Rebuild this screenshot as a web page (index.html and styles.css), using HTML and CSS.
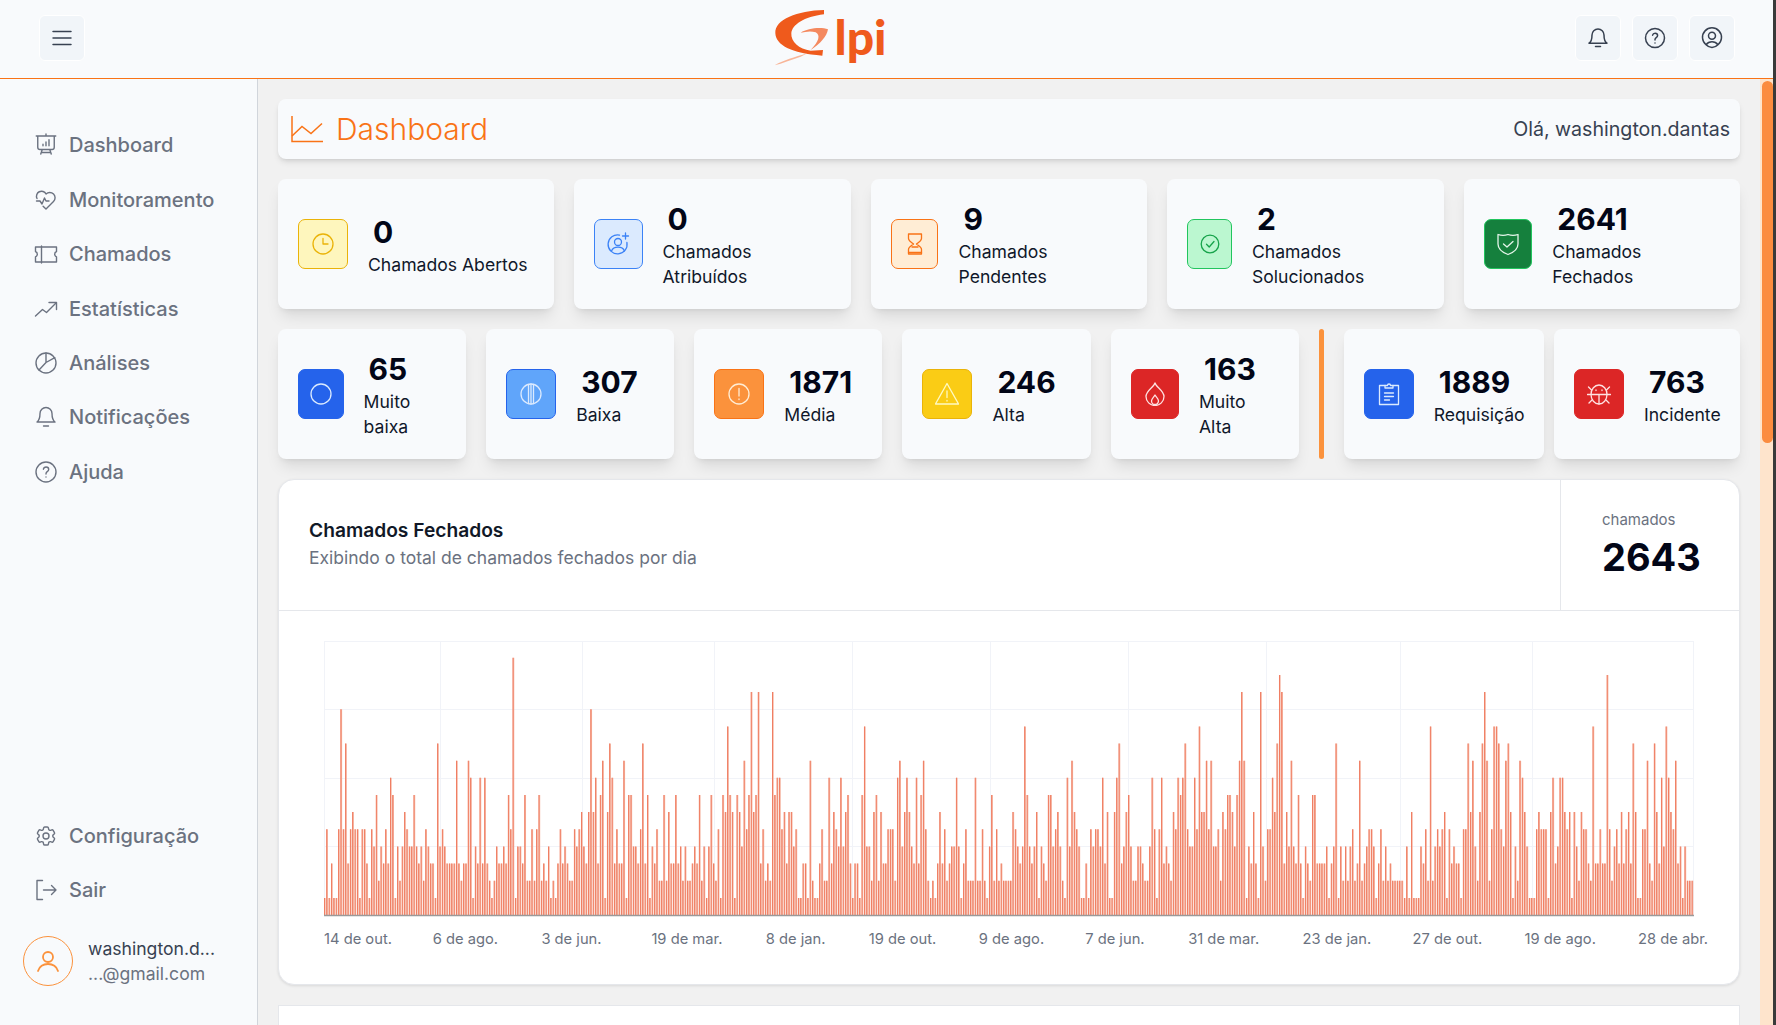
FILE: index.html
```html
<!DOCTYPE html>
<html lang="pt-BR">
<head>
<meta charset="utf-8">
<title>GLPI Dashboard</title>
<link rel="stylesheet" href="styles.css">
</head>
<body>
<div class="app">
  <header class="topbar">
    <button class="tool-btn" aria-label="Menu">
      <svg class="ico-menu" viewBox="0 0 24 24"><path d="M3.750 6h16.500M3.750 12h16.500M3.750 18h16.500"/></svg>
    </button>
    <div class="logo">
      <svg class="logo-mark" viewBox="220 0 165 219" aria-hidden="true">
        <path class="logo-a" d="M370 30C290 32 222 58 224 100C226 135 270 160 365 167L367 150L330 152C295 148 270 125 272 100C274 75 310 50 370 43Z"/>
        <path class="logo-b" d="M300 98C320 85 360 80 382 88C378 110 360 130 330 150C355 125 360 105 345 97C330 92 315 95 300 98Z"/>
        <path class="logo-c" d="M222 196C250 180 280 172 320 160L300 170C270 180 245 190 222 196Z"/>
      </svg>
      <span class="logo-text">lpi</span>
    </div>
    <div class="tools">
      <button class="tool-btn" aria-label="Notificações">
        <svg class="ico-24" viewBox="0 0 24 24"><path d="M6 9a6 6 0 0 1 12 0c0 5 1 7 3 8.200H3C5 16 6 14 6 9z"/><path d="M9.500 20.500h5"/></svg>
      </button>
      <button class="tool-btn" aria-label="Ajuda">
        <svg class="ico-24" viewBox="0 0 24 24"><circle cx="12" cy="12" r="9.500"/><path d="M9.600 9.200c.3-1.300 1.300-2 2.500-2 1.400 0 2.500 1 2.500 2.300 0 1-.6 1.600-1.400 2.100-.7.500-1.200 1-1.200 2v.4M12 16.900v.1"/></svg>
      </button>
      <button class="tool-btn" aria-label="Perfil">
        <svg class="ico-24" viewBox="0 0 24 24"><path d="M17.982 18.725A7.488 7.488 0 0 0 12 15.750a7.488 7.488 0 0 0-5.982 2.975m11.963 0a9.500 9.500 0 1 0-11.963 0m11.963 0A9.500 9.500 0 0 1 12 21.500a9.500 9.500 0 0 1-5.982-2.775M15.500 9.750a3.500 3.500 0 1 1-7 0 3.500 3.500 0 0 1 7 0Z"/></svg>
      </button>
    </div>
  </header>

  <div class="layout">
    <aside class="sidebar">
      <nav class="nav">
        <a class="nav-item"><svg class="nav-ico" viewBox="0 0 24 24"><path d="M3.750 3v11.250A2.250 2.250 0 0 0 6 16.500h2.250M3.750 3h-1.500m1.500 0h16.500m0 0h1.500m-1.500 0v11.250A2.250 2.250 0 0 1 18 16.500h-2.250m-7.500 0h7.500m-7.500 0-1 3m8.500-3 1 3m0 0 .5 1.500m-.5-1.500h-9.500m0 0-.5 1.500M9 11.250v1.500M12 9v3.750m3-6v6M12 3V1"/></svg>Dashboard</a>
        <a class="nav-item"><svg class="nav-ico" viewBox="0 0 24 24"><path d="M19.500 13.572l-7.500 7.428l-2.896-2.868M3 10.500a5 5 0 0 1 9-4.500a5 5 0 1 1 7.500 7.572"/><path d="M2.500 13h3.500l2 3l2.500-6l1.500 3h3"/></svg>Monitoramento</a>
        <a class="nav-item"><svg class="nav-ico" viewBox="0 0 24 24"><path d="M1.500 5h21v4.500a3 3 0 0 0 0 5.500V20h-21v-5a3 3 0 0 0 0-5.500z"/><path d="M7.500 4v17"/></svg>Chamados</a>
        <a class="nav-item"><svg class="nav-ico" viewBox="0 0 24 24"><path d="M1.500 19l7-6.500l4 3l9.500-9.500"/><path d="M15 5.500h7.500v7"/></svg>Estatísticas</a>
        <a class="nav-item"><svg class="nav-ico" viewBox="0 0 24 24"><circle cx="12" cy="12" r="10"/><path d="M12 2v9.500l8.800-4.800M12 11.500l-7 7.500"/></svg>Análises</a>
        <a class="nav-item"><svg class="nav-ico" viewBox="0 0 24 24"><path d="M6 8.500a6 6 0 0 1 12 0c0 5 1 7 3 8.500H3c2-1.500 3-3.500 3-8.500z"/><path d="M9.500 21h5"/></svg>Notificações</a>
        <a class="nav-item"><svg class="nav-ico" viewBox="0 0 24 24"><circle cx="12" cy="12" r="10"/><path d="M9.400 9.200c.3-1.400 1.400-2.200 2.700-2.200 1.500 0 2.600 1 2.600 2.400 0 1.100-.6 1.700-1.500 2.200-.7.500-1.200 1-1.200 2.100v.4M12 17v.1"/></svg>Ajuda</a>
      </nav>
      <div class="side-foot">
        <a class="nav-item"><svg class="nav-ico" viewBox="0 0 24 24"><path d="M9.594 3.940c.09-.542.56-.94 1.110-.94h2.593c.55 0 1.020.398 1.110.94l.213 1.281c.063.374.313.686.645.870.074.040.147.083.22.127.325.196.72.257 1.075.124l1.217-.456a1.125 1.125 0 0 1 1.370.49l1.296 2.247a1.125 1.125 0 0 1-.26 1.431l-1.003.827c-.293.241-.438.613-.43.992a7.723 7.723 0 0 1 0 .255c-.008.378.137.75.43.991l1.004.827c.424.35.534.955.26 1.430l-1.298 2.247a1.125 1.125 0 0 1-1.369.491l-1.217-.456c-.355-.133-.75-.072-1.076.124a6.470 6.470 0 0 1-.22.128c-.331.183-.581.495-.644.869l-.213 1.281c-.09.543-.56.94-1.110.94h-2.594c-.55 0-1.019-.398-1.110-.94l-.213-1.281c-.062-.374-.312-.686-.644-.87a6.520 6.520 0 0 1-.22-.127c-.325-.196-.72-.257-1.076-.124l-1.217.456a1.125 1.125 0 0 1-1.369-.49l-1.297-2.247a1.125 1.125 0 0 1 .26-1.431l1.004-.827c.292-.24.437-.613.43-.991a6.932 6.932 0 0 1 0-.255c.007-.38-.138-.751-.43-.992l-1.004-.827a1.125 1.125 0 0 1-.26-1.430l1.297-2.247a1.125 1.125 0 0 1 1.370-.491l1.216.456c.356.133.751.072 1.076-.124.072-.044.146-.086.22-.128.332-.183.582-.495.644-.869l.214-1.280Z"/><path d="M15 12a3 3 0 1 1-6 0 3 3 0 0 1 6 0Z"/></svg>Configuração</a>
        <a class="nav-item"><svg class="nav-ico" viewBox="0 0 24 24"><path d="M8.500 2.500H3v19h5.500"/><path d="M9.500 12h12.500M17.500 7.500L22 12l-4.500 4.500"/></svg>Sair</a>
        <div class="profile">
          <span class="avatar"><svg class="ico-avatar" viewBox="0 0 24 24"><circle cx="12" cy="8" r="5"/><path d="M2 22c1.500-4.500 5-7 10-7s8.500 2.500 10 7"/></svg></span>
          <div class="profile-text">
            <div class="profile-name">washington.d...</div>
            <div class="profile-mail">...@gmail.com</div>
          </div>
        </div>
      </div>
    </aside>

    <main class="main">
      <section class="page-head">
        <h1 class="page-title">
          <svg class="title-ico" viewBox="0 0 32 27"><path d="M1 0v25.500h31"/><path d="M1 20l10-9.500 9 7 11-10"/></svg>
          Dashboard
        </h1>
        <span class="greeting">Olá, washington.dantas</span>
      </section>

      <section class="stat-row">
        <article class="stat stat-equal">
          <span class="stat-ico t-yellow"><svg viewBox="0 0 24 24"><circle cx="12" cy="12" r="10"/><path d="M12 6.500V12h5"/></svg></span>
          <div class="stat-text"><div class="stat-num">0</div><div class="stat-label">Chamados Abertos</div></div>
        </article>
        <article class="stat stat-equal">
          <span class="stat-ico t-blue"><svg viewBox="0 0 24 24"><path d="M13.500 3.100A9.500 9.500 0 1 0 20.900 10.500"/><circle cx="12" cy="10" r="3.500"/><path d="M5.500 19c1-2.500 3.500-3.800 6.500-3.800s5.500 1.300 6.500 3.800"/><path d="M19.500 1v6M16.500 4h6"/></svg></span>
          <div class="stat-text"><div class="stat-num">0</div><div class="stat-label">Chamados Atribuídos</div></div>
        </article>
        <article class="stat stat-equal">
          <span class="stat-ico t-orange"><svg viewBox="0 0 24 24"><path d="M5.500 2h13v4.500c0 2.500-3.500 4-5 5.500 1.500 1.500 5 3 5 5.500V22h-13v-4.500c0-2.500 3.500-4 5-5.500-1.500-1.500-5-3-5-5.500z"/><path d="M5.500 20.500h13M9 15h6"/></svg></span>
          <div class="stat-text"><div class="stat-num">9</div><div class="stat-label">Chamados Pendentes</div></div>
        </article>
        <article class="stat stat-equal">
          <span class="stat-ico t-green"><svg viewBox="0 0 24 24"><circle cx="12" cy="12" r="8.800"/><path d="M8.500 12.300l2.700 2.700 4.800-5.500"/></svg></span>
          <div class="stat-text"><div class="stat-num">2</div><div class="stat-label">Chamados Solucionados</div></div>
        </article>
        <article class="stat stat-equal">
          <span class="stat-ico t-dgreen"><svg viewBox="0 0 24 24"><path d="M2 2.500c3 1 6.500 1.200 10 0 3.500 1.200 7 1 10 0v9.500c0 5-4.500 8.500-10 10.500C6.500 20.500 2 17 2 12z"/><path d="M7.500 12l3.500 3 6-5.500"/></svg></span>
          <div class="stat-text"><div class="stat-num">2641</div><div class="stat-label">Chamados Fechados</div></div>
        </article>
      </section>

      <section class="stat-row">
        <article class="stat stat-equal">
          <span class="stat-ico t-solid-blue"><svg viewBox="0 0 24 24"><circle cx="12" cy="12" r="10"/></svg></span>
          <div class="stat-text"><div class="stat-num">65</div><div class="stat-label">Muito baixa</div></div>
        </article>
        <article class="stat stat-equal">
          <span class="stat-ico t-sky"><svg viewBox="0 0 24 24"><circle cx="12" cy="12" r="10"/><path d="M9.500 2.500v19M14.500 2.500v19M12 2v20"/></svg></span>
          <div class="stat-text"><div class="stat-num">307</div><div class="stat-label">Baixa</div></div>
        </article>
        <article class="stat stat-equal">
          <span class="stat-ico t-amber"><svg viewBox="0 0 24 24"><circle cx="12" cy="12" r="10"/><path d="M12 6.500v7.500M12 17v.5"/></svg></span>
          <div class="stat-text"><div class="stat-num">1871</div><div class="stat-label">Média</div></div>
        </article>
        <article class="stat stat-equal">
          <span class="stat-ico t-gold"><svg viewBox="0 0 24 24"><path d="M12 1.500L.5 22h23z"/><path d="M12 9v6.500M12 18.500v.5"/></svg></span>
          <div class="stat-text"><div class="stat-num">246</div><div class="stat-label">Alta</div></div>
        </article>
        <article class="stat stat-equal">
          <span class="stat-ico t-red"><svg viewBox="0 0 24 24"><path d="M12 1c1 4 9 7.500 9 13.500a9 9 0 0 1-18 0C3 8.500 11 5 12 1z"/><path d="M12 13c1 2 3.500 3.500 3.500 6a3.500 3.500 0 0 1-7 0c0-2.500 2.500-4 3.500-6z"/></svg></span>
          <div class="stat-text"><div class="stat-num">163</div><div class="stat-label">Muito Alta</div></div>
        </article>
        <div class="row-divider"></div>
        <div class="stat-pair">
          <article class="stat">
            <span class="stat-ico t-solid-blue"><svg viewBox="0 0 24 24"><path d="M8 3.500H2.500v19h19v-19H16"/><path d="M8 6V3.500h2.500a1.500 1.500 0 0 1 3 0H16V6z"/><path d="M7.500 11h9M7.500 14.500h9M7.500 18h5"/></svg></span>
            <div class="stat-text"><div class="stat-num">1889</div><div class="stat-label">Requisição</div></div>
          </article>
          <article class="stat">
            <span class="stat-ico t-red"><svg viewBox="0 0 24 24"><ellipse cx="12" cy="12.500" rx="8" ry="9.500"/><path d="M.5 12.500h23M12 12.500V22M4.500 8L1.500 5M19.500 8l3-3M5 18l-3 3M19 18l3 3"/><path d="M9 8v.5M15 8v.5"/></svg></span>
            <div class="stat-text"><div class="stat-num">763</div><div class="stat-label">Incidente</div></div>
          </article>
        </div>
      </section>

      <section class="chart-card">
        <div class="chart-head">
          <div class="chart-title-box">
            <h2 class="chart-title">Chamados Fechados</h2>
            <p class="chart-sub">Exibindo o total de chamados fechados por dia</p>
          </div>
          <div class="chart-total">
            <span class="total-label">chamados</span>
            <span class="total-num">2643</span>
          </div>
        </div>
        <div class="chart-body">
          <svg class="plot" width="1372" height="276" viewBox="0 0 1372 276">
            <path class="grid" d="M0 .5H1370M0 68.500H1370M0 137.500H1370M0 205.500H1370M.5 0V274M116.500 0V274M258.500 0V274M390.500 0V274M528.500 0V274M666.500 0V274M804.500 0V274M942.500 0V274M1076.500 0V274M1208.500 0V274M1369.500 0V274"/>
            <path class="bars" id="bars" d=""/>
            <path class="bars-edge" id="bars-edge" d=""/>
            <path class="baseline" d="M0 274.500H1370"/>
          </svg>
          <div class="axis">
            <span>14 de out.</span><span>6 de ago.</span><span>3 de jun.</span><span>19 de mar.</span><span>8 de jan.</span><span>19 de out.</span><span>9 de ago.</span><span>7 de jun.</span><span>31 de mar.</span><span>23 de jan.</span><span>27 de out.</span><span>19 de ago.</span><span>28 de abr.</span>
          </div>
        </div>
      </section>

      <section class="next-card"></section>
    </main>
    <div class="scrollbar"><div class="scroll-thumb"></div></div>
  </div>
</div>
<script src="chart.js"></script>
</body>
</html>
```

FILE: styles.css
```css
* { box-sizing: border-box; }
html, body { margin: 0; height: 100%; overflow: hidden; }
body { font-family: Inter, "Noto Sans", sans-serif; background: #3a3a3a; color: #111827; }

.app { display: flex; flex-direction: column; width: calc(100% - 3px); height: 100%; background: #f1f1f1; }

/* top bar */
.topbar { flex: none; height: 79px; display: flex; align-items: center; justify-content: space-between; padding: 0 38.5px 2px 38.5px; background: #f8fafc; border-bottom: 1px solid #f97316; }
.tools { display: flex; gap: 11px; }
.tool-btn { width: 46px; height: 46px; padding: 0; display: flex; align-items: center; justify-content: center; background: #f1f5f9; border: 1px solid #fff; border-radius: 6px; color: #374151; }
.tool-btn svg { fill: none; stroke: currentColor; stroke-width: 1.5; stroke-linecap: round; stroke-linejoin: round; }
.ico-menu { width: 26px; height: 26px; }
.ico-24 { width: 24px; height: 24px; }
.logo { width: 112px; height: 73px; margin-top: -3px; display: flex; align-items: flex-start; gap: 6px; }
.logo-mark { flex: none; width: 55px; height: 73px; }
.logo-a { fill: #ef5a1c; }
.logo-b { fill: #f4895f; }
.logo-c { fill: #f8b598; }
.logo-text { margin-top: 15px; font-family: Lato, "Open Sans", sans-serif; font-weight: 900; font-size: 48px; line-height: 44px; color: #ef5a1c; }

/* layout */
.layout { flex: 1; min-height: 0; display: flex; }
.sidebar { flex: none; width: 258px; display: flex; flex-direction: column; padding: 39.3px 0 39px; background: #f8fafc; border-right: 1px solid #d1d5db; }
.nav { display: flex; flex-direction: column; }
.side-foot { margin-top: auto; display: flex; flex-direction: column; }
.nav-item { height: 54.4px; display: flex; align-items: center; gap: 11px; padding-left: 34px; font-size: 20px; font-weight: 500; color: #6b7280; }
.side-foot .nav-item { height: 54px; }
.nav-ico { width: 24px; height: 24px; flex: none; fill: none; stroke: currentColor; stroke-width: 1.4; stroke-linecap: round; stroke-linejoin: round; }
.profile { display: flex; align-items: center; gap: 15px; padding-left: 23px; margin-top: 19.4px; }
.avatar { width: 50px; height: 50px; flex: none; display: flex; align-items: center; justify-content: center; border: 1px solid #fb923c; border-radius: 50%; }
.ico-avatar { width: 24px; height: 24px; fill: none; stroke: #fb923c; stroke-width: 1.8; stroke-linecap: round; }
.profile-name { font-size: 17.6px; line-height: 25px; color: #374151; }
.profile-mail { font-size: 17.6px; line-height: 25px; color: #6b7280; }

/* main */
.main { flex: 1; min-width: 0; padding: 20px; overflow: hidden; }
.scrollbar { flex: none; width: 13px; padding: 2px 0 0 2px; background: #fee4cc; }
.scroll-thumb { height: 362px; background: #fb8c3f; border-radius: 6px; }

.page-head { height: 60px; display: flex; align-items: center; justify-content: space-between; padding: 0 10px 0 13px; background: #f8fafc; border-radius: 8px; box-shadow: 0 4px 6px -1px rgba(0,0,0,.1), 0 2px 4px -2px rgba(0,0,0,.1); margin-bottom: 20px; }
.page-title { margin: 0; display: flex; align-items: center; gap: 13px; font-size: 30px; font-weight: 300; color: #f97316; }
.title-ico { width: 32px; height: 27px; fill: none; stroke: #f97316; stroke-width: 1.5; }
.greeting { font-size: 19.6px; color: #374151; }

.stat-row { display: flex; gap: 20px; margin-bottom: 20px; height: 130px; }
.stat { display: flex; align-items: center; gap: 20px; padding: 20px; background: #f8fafc; border-radius: 8px; box-shadow: 0 10px 15px -3px rgba(0,0,0,.1), 0 4px 6px -4px rgba(0,0,0,.1); }
.stat-equal { flex: 1 1 0; min-width: 0; }
.stat-pair { flex: none; display: flex; gap: 10px; }
.stat-pair .stat { padding-right: 19.3px; }
.row-divider { flex: none; width: 5px; background: #fb923c; border-radius: 3px; }
.stat-ico { flex: 0 .65 50px; width: 50px; height: 50px; display: flex; align-items: center; justify-content: center; border: 1px solid; border-radius: 7px; }
.stat-ico svg { width: 24px; height: 24px; fill: none; stroke: currentColor; stroke-width: 1.3; stroke-linecap: round; stroke-linejoin: round; flex: none; }
.stat-text { min-width: 0; padding-bottom: 1px; }
.stat-num { font-size: 30px; font-weight: 700; line-height: 42px; margin: 0 0 -1px 5px; color: #020617; }
.stat-label { font-size: 17.6px; line-height: 25px; color: #0f172a; }

.t-yellow { background: #fef6bd; border-color: #eab308; color: #eab308; }
.t-blue { background: #dbeafe; border-color: #3b82f6; color: #3b82f6; }
.t-orange { background: #ffedd5; border-color: #f97316; color: #f97316; }
.t-green { background: #bbf7d0; border-color: #22c55e; color: #16a34a; }
.t-dgreen { background: #15803d; border-color: #22c55e; color: #e5f5ea; }
.t-solid-blue { background: #2563eb; border-color: #2563eb; color: #dbeafe; }
.t-sky { background: #60a5fa; border-color: #2563eb; color: #dbeafe; }
.t-amber { background: #fb923c; border-color: #f97316; color: #ffedd5; }
.t-gold { background: #facc15; border-color: #eab308; color: #fef9c3; }
.t-red { background: #dc2626; border-color: #dc2626; color: #fee2e2; }

/* chart card */
.chart-card { background: #fff; border: 1px solid #e5e7eb; border-radius: 16px; box-shadow: 0 1px 3px rgba(0,0,0,.1); margin-bottom: 20px; }
.chart-head { height: 131px; display: flex; border-bottom: 1px solid #e5e7eb; }
.chart-title-box { flex: 1; display: flex; flex-direction: column; justify-content: center; padding: 0 0 3px 30px; }
.chart-title { margin: 0 0 1px; font-size: 19.2px; line-height: 28px; font-weight: 600; color: #111827; }
.chart-sub { margin: 0; font-size: 17.5px; line-height: 26px; color: #6b7280; }
.chart-total { flex: none; width: 179px; display: flex; flex-direction: column; justify-content: center; padding-left: 41px; border-left: 1px solid #e5e7eb; }
.total-label { font-size: 15px; line-height: 20px; color: #6b7280; margin-bottom: 4px; }
.total-num { font-size: 38px; line-height: 46px; font-weight: 700; color: #020617; }
.chart-body { padding: 30px 0 35px 45px; }
.plot { display: block; }
.grid { fill: none; stroke: #f1f3f8; stroke-width: 1; }
.bars { fill: #f4ab96; }
.bars-edge { fill: #ee6b4d; }
.baseline { fill: none; stroke: #9a9a9a; stroke-width: 1.5; }
.axis { display: grid; grid-template-columns: 108.7px 108.7px 110px 114.4px 103px 110px 106.4px 103px 114.4px 110px 112px 113.4px auto; width: 1385px; margin-top: 12px; font-size: 14.72px; line-height: 20px; color: #6b7280; white-space: nowrap; }

.next-card { height: 200px; background: #fff; border: 1px solid #e5e7eb; }
```

FILE: chart.js
```js
var DATA = [
  "1513115c5a", "3565515531", "5472435387", "1424654474", "34254331a4", "5433339323", "3981438383", "2124334375",
  "f144372252", "5723241213", "5343225456", "436c683791", "6a83533917", "74435a3714", "3522726337", "3424223437",
  "2414732517", "6b76176495", "7d67d35232",
  "d788563664", "5113319211", "3522836548", "467313317b", "4426726335", "5528946864", "3837952121", "3635234484",
  "1352228225", "2147252322", "2265434b74", "3461432774", "5642184965", "4",
  "1131545548", "361168a346", "7422443224", "8515834326", "5878a54485", "b669594452", "65776479d9", "143631d425",
  "586aed3649", "4373143277", "33334134a1", "4242452392", "3455413",
  "5242322222", "1416111435", "2b24545615", "3433155a69", "426ad925bb", "a549a61429", "8641115655", "5168348865",
  "6164265532", "b33533e524", "5363563a61", "155932a638", "4b86593414", "222"
].join("");

var STEP = 1370 / DATA.length;
var UNIT = 17.15;
var fillPath = "";
var edgePath = "";
for (var i = 0; i < DATA.length; i++) {
  var level = parseInt(DATA.charAt(i), 16);
  var barTop = (274 - level * UNIT).toFixed(1);
  var barX = (i * STEP).toFixed(2);
  fillPath += "M" + barX + " 274V" + barTop + "h1.6V274z";
  edgePath += "M" + barX + " 274V" + barTop + "h.7V274z";
}
document.getElementById("bars").setAttribute("d", fillPath);
document.getElementById("bars-edge").setAttribute("d", edgePath);
```
